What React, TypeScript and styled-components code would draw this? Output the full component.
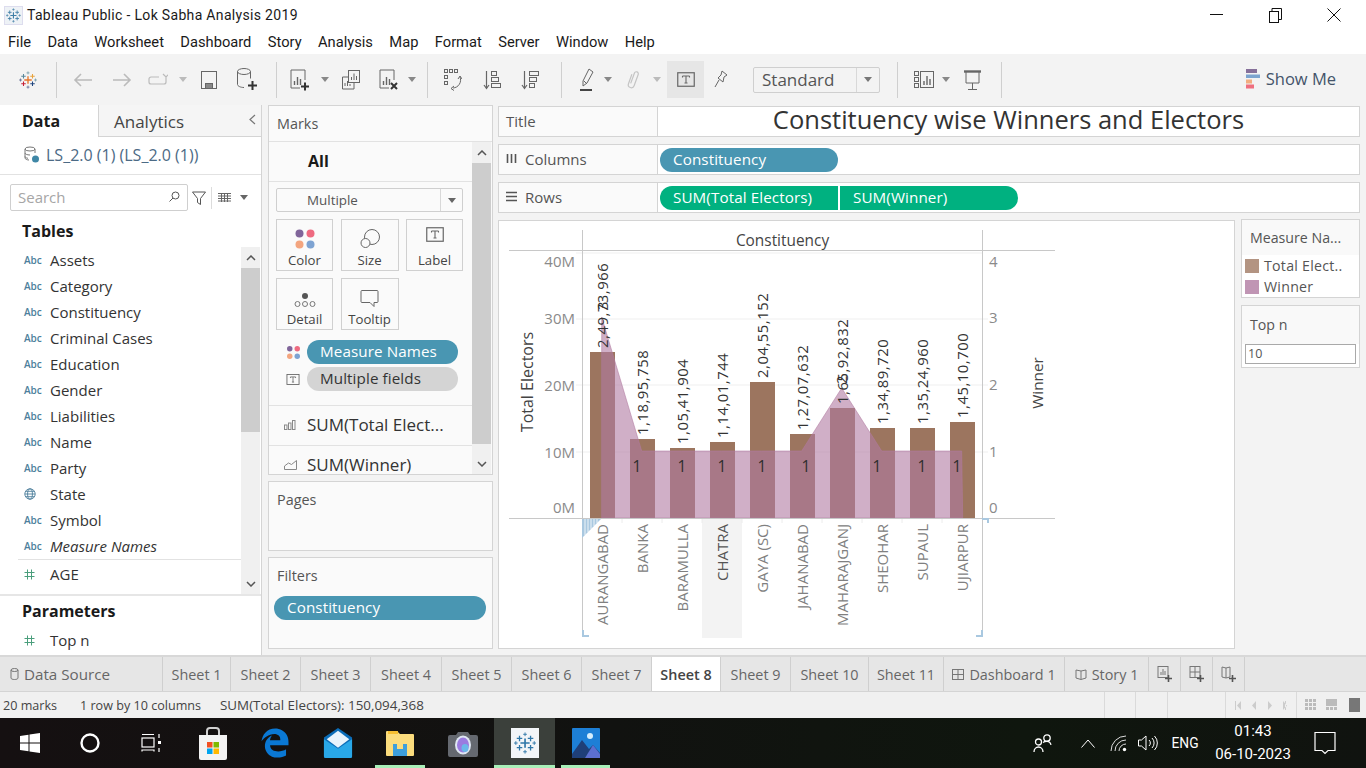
import React from 'react';
import styled, { createGlobalStyle } from 'styled-components';
import { FaEdgeLegacy } from 'react-icons/fa6';

const GlobalStyle = createGlobalStyle`
  html, body {
    margin: 0;
    padding: 0;
    background: #f3f3f3;
    overflow: hidden;
  }
  * { box-sizing: border-box; }
`;

const UI = `"Open Sans", "Noto Sans", sans-serif`;
const LINE = '#d4d4d4';

const Screen = styled.div`
  width: 1366px;
  height: 768px;
  display: flex;
  flex-direction: column;
  font-family: ${UI};
  color: #333;
  overflow: hidden;
`;

/* ---------- window chrome ---------- */
const TitleBar = styled.div`
  height: 30px;
  background: #fff;
  display: flex;
  align-items: center;
  padding-left: 4px;
`;
const TitleText = styled.span`
  font: 14px Roboto, sans-serif;
  color: #1a1a1a;
  margin-left: 4px;
  letter-spacing: 0.32px;
`;
const WindowButtons = styled.div`
  margin-left: auto;
  padding-right: 3px;
  display: flex;
`;
const WindowButton = styled.div`
  width: 58.5px;
  height: 30px;
  display: flex;
  align-items: center;
  justify-content: center;
`;
const MenuBar = styled.div`
  height: 24px;
  background: #fff;
  display: flex;
  align-items: center;
  padding-left: 8px;
  gap: 16.4px;
  font: 14.7px Roboto, sans-serif;
  color: #1a1a1a;
`;

/* ---------- toolbar ---------- */
const Toolbar = styled.div`
  height: 51px;
  background: #f3f3f3;
  display: flex;
  align-items: center;
  position: relative;
`;
const ToolSlot = styled.div<{ $w: number; $active?: boolean }>`
  width: ${p => p.$w}px;
  height: 37px;
  flex: none;
  display: flex;
  align-items: center;
  justify-content: center;
  background: ${p => (p.$active ? '#e6e6e6' : 'transparent')};
  & > svg { flex: none; }
`;
const ToolDivider = styled.div`
  width: 1px;
  height: 36px;
  flex: none;
  background: #cfcfcf;
`;
const StandardSelect = styled.div`
  width: 127px;
  height: 26px;
  flex: none;
  border: 1px solid #cfcfcf;
  border-radius: 2px;
  display: flex;
  align-items: center;
  font-size: 17px;
  color: #555;
`;
const StandardValue = styled.div`
  flex: 1;
  padding-left: 8px;
  border-right: 1px solid #d8d8d8;
  height: 100%;
  line-height: 24px;
`;
const StandardCaret = styled.div`
  width: 22px;
  display: flex;
  justify-content: center;
`;
const ShowMe = styled.div`
  margin-left: auto;
  margin-right: 30px;
  margin-top: -2px;
  display: flex;
  align-items: center;
  gap: 6px;
  font-size: 16.5px;
  color: #44546a;
`;

/* ---------- workspace ---------- */
const Workspace = styled.div`
  height: 550px;
  display: flex;
  background: #f3f3f3;
`;
const LeftPane = styled.div`
  width: 262px;
  background: #fff;
  border-right: 1px solid ${LINE};
  display: flex;
  flex-direction: column;
  flex: none;
`;
const PaneTabs = styled.div`
  height: 32px;
  display: flex;
`;
const DataTab = styled.div`
  width: 98px;
  padding-left: 22px;
  font-size: 16px;
  font-weight: 700;
  color: #1a1a1a;
  line-height: 33px;
`;
const AnalyticsTab = styled.div`
  flex: 1;
  background: #f5f5f5;
  border-left: 1px solid ${LINE};
  border-bottom: 1px solid ${LINE};
  padding-left: 15px;
  font-size: 17px;
  color: #444;
  line-height: 34px;
  display: flex;
  justify-content: space-between;
`;
const CollapseMark = styled.span`
  margin-right: 5px;
  display: flex;
  align-items: center;
  margin-top: -3px;
`;
const SourceRow = styled.div`
  height: 38px;
  flex: none;
  border-bottom: 1px solid #e2e2e2;
  display: flex;
  align-items: center;
  padding-left: 24px;
  padding-bottom: 1px;
  gap: 6px;
  font-size: 16px;
  color: #4c6a85;
`;
const SearchRow = styled.div`
  height: 45px;
  display: flex;
  align-items: center;
  padding: 0 0 0 10px;
  flex: none;
`;
const SearchBox = styled.div`
  width: 178px;
  height: 27px;
  border: 1px solid #cfcfcf;
  border-radius: 2px;
  display: flex;
  align-items: center;
  justify-content: space-between;
  padding: 0 7px 2px;
  font-size: 15px;
  color: #a6a6a6;
`;
const FilterGlyph = styled.svg`
  margin-left: 4px;
  flex: none;
`;
const ListCaret = styled.svg`
  margin-left: 9px;
  flex: none;
`;
const SearchDivider = styled.div`
  width: 1px;
  height: 22px;
  background: #dcdcdc;
  margin: 0 6px 0 5px;
`;
const GroupTitle = styled.div<{ $h: number; $pb?: number }>`
  height: ${p => p.$h}px;
  flex: none;
  padding-left: 22px;
  padding-bottom: ${p => p.$pb || 0}px;
  font-size: 16px;
  font-weight: 700;
  color: #1a1a1a;
  display: flex;
  align-items: center;
`;
const FieldArea = styled.div`
  height: 349px;
  flex: none;
  display: flex;
  border-bottom: 2px solid #e6e6e6;
`;
const FieldList = styled.div`
  flex: 1;
  overflow: hidden;
`;
const FieldRow = styled.div<{ $ruled?: boolean }>`
  height: 26px;
  display: flex;
  align-items: center;
  margin-left: 18px;
  font-size: 15px;
  color: #333;
  ${p => p.$ruled && `border-top: 1px solid #e2e2e2; height: 30px; padding-bottom: 1px;`}
`;
const ParamRow = styled(FieldRow)`
  margin-top: 2px;
`;
const FieldGlyph = styled.div`
  width: 32px;
  padding-left: 6px;
  flex: none;
  font-size: 10px;
  font-weight: 600;
  color: #4d7f9c;
  display: flex;
  align-items: center;
`;
const FieldName = styled.span<{ $italic?: boolean }>`
  font-style: ${p => (p.$italic ? 'italic' : 'normal')};
`;
const ScrollTrack = styled.div<{ $w: number }>`
  width: ${p => p.$w}px;
  flex: none;
  background: #f0f0f0;
  display: flex;
  flex-direction: column;
  margin-right: 1px;
`;
const ScrollCap = styled.div`
  height: 21px;
  flex: none;
  display: flex;
  align-items: center;
  justify-content: center;
`;
const ScrollThumb = styled.div<{ $h: number }>`
  height: ${p => p.$h}px;
  flex: none;
  background: #cdcdcd;
`;
const ScrollRest = styled.div`
  flex: 1;
`;

/* ---------- marks column ---------- */
const MarksColumn = styled.div`
  width: 225px;
  margin-left: 6px;
  flex: none;
  display: flex;
  flex-direction: column;
  gap: 6px;
`;
const Card = styled.div<{ $h: number }>`
  height: ${p => p.$h}px;
  flex: none;
  background: #fafafa;
  border: 1px solid ${LINE};
  overflow: hidden;
`;
const CardTitle = styled.div`
  height: 35px;
  padding-left: 8px;
  font-size: 14.4px;
  color: #555;
  line-height: 36px;
`;
const MarksBody = styled.div`
  height: 333px;
  display: flex;
  border-top: 1px solid #e2e2e2;
`;
const MarksContent = styled.div`
  flex: 1;
  overflow: hidden;
`;
const AllRow = styled.div`
  height: 40px;
  border-bottom: 1px solid #e2e2e2;
  padding-left: 39px;
  font-size: 16px;
  font-weight: 700;
  color: #1a1a1a;
  line-height: 38px;
`;
const MarkTypeSelect = styled.div`
  width: 187px;
  height: 24px;
  margin: 6px 0 7px 7px;
  border: 1px solid #cfcfcf;
  border-radius: 2px;
  display: flex;
  align-items: center;
  font-size: 13.4px;
  color: #555;
`;
const MarkTypeValue = styled.div`
  flex: 1;
  padding-left: 30px;
  border-right: 1px solid #d8d8d8;
  line-height: 22px;
  height: 100%;
`;
const MarkTypeCaret = styled.div`
  width: 21px;
  display: flex;
  justify-content: center;
`;
const MarkCards = styled.div`
  display: grid;
  grid-template-columns: 57px 58px 57px;
  grid-auto-rows: 52px;
  column-gap: 7.5px;
  row-gap: 7px;
  margin-left: 7px;
`;
const MarkCard = styled.div`
  border: 1px solid #d0d0d0;
  display: flex;
  flex-direction: column;
  align-items: center;
  justify-content: flex-end;
  gap: 1px;
  padding-bottom: 1px;
  font-size: 13.2px;
  color: #444;
`;
const LabelGlyph = styled.div`
  padding-bottom: 4px;
`;
const PillRows = styled.div`
  margin: 10px 0 14px 16px;
  display: flex;
  flex-direction: column;
  gap: 3px;
`;
const PillRow = styled.div`
  display: flex;
  align-items: center;
  gap: 6px;
`;
const GlyphBox = styled.div`
  width: 16px;
  display: flex;
  justify-content: center;
`;
const Pill = styled.div<{ $bg: string; $dark?: boolean; $w: number; $side?: 'left' | 'right' }>`
  width: ${p => p.$w}px;
  height: 24px;
  flex: none;
  background: ${p => p.$bg};
  color: ${p => (p.$dark ? '#333' : '#fff')};
  border-radius: ${p =>
    p.$side === 'left' ? '12px 0 0 12px' : p.$side === 'right' ? '0 12px 12px 0' : '12px'};
  padding-left: 13px;
  font-size: 15.2px;
  letter-spacing: 0.1px;
  font-weight: 500;
  line-height: 23px;
  white-space: nowrap;
`;
const MeasureRow = styled.div`
  height: 40px;
  border-top: 1px solid #e2e2e2;
  display: flex;
  align-items: center;
  padding-bottom: 2px;
  font-size: 17px;
  color: #333;
`;
const MeasureGlyph = styled.div`
  width: 38px;
  flex: none;
  display: flex;
  justify-content: center;
  padding-left: 4px;
`;
const FilterPill = styled.div`
  margin: 3px 5px 0;
`;

/* ---------- view column ---------- */
const ViewColumn = styled.div`
  width: 862px;
  margin-left: 5px;
  padding-top: 1px;
  display: flex;
  flex-direction: column;
  gap: 7px;
  flex: none;
`;
const Shelf = styled.div`
  height: 31px;
  flex: none;
  background: #fff;
  border: 1px solid ${LINE};
  display: flex;
  align-items: center;
`;
const ShelfLabel = styled.div`
  width: 159px;
  height: 100%;
  flex: none;
  border-right: 1px solid ${LINE};
  display: flex;
  align-items: center;
  padding: 0 0 2px 7px;
  gap: 8px;
  font-size: 15px;
  color: #555;
  background: #fafafa;
`;
const ShelfPills = styled.div`
  display: flex;
  gap: 2px;
  padding-left: 2px;
`;
const ChartTitle = styled.div`
  flex: 1;
  text-align: center;
  font-size: 25.5px;
  color: #333;
  line-height: 26px;
  margin-top: -6px;
`;
const ViewBody = styled.div`
  height: 429px;
  display: flex;
  gap: 6px;
`;
const ChartPanel = styled.div`
  width: 737px;
  height: 429px;
  flex: none;
  background: #fff;
  border: 1px solid ${LINE};
`;
const ChartSvg = styled.svg`
  display: block;
  font-family: ${UI};
`;
const SideColumn = styled.div`
  width: 119px;
  margin-top: -1px;
  display: flex;
  flex-direction: column;
  gap: 7px;
`;
const SideCard = styled.div<{ $h: number }>`
  height: ${p => p.$h}px;
  border: 1px solid ${LINE};
  background: #fff;
`;
const SideTitle = styled.div<{ $h: number }>`
  height: ${p => p.$h}px;
  background: #f9f9f9;
  padding-left: 8px;
  font-size: 14.2px;
  color: #555;
  line-height: ${p => p.$h}px;
`;
const LegendRow = styled.div`
  height: 21px;
  display: flex;
  align-items: center;
  gap: 5px;
  padding-left: 3px;
  font-size: 14.2px;
  color: #555;
  letter-spacing: 0.25px;
`;
const LegendSwatch = styled.div<{ $c: string }>`
  width: 14px;
  height: 14px;
  background: ${p => p.$c};
`;
const TopNInput = styled.div`
  width: 111px;
  height: 20px;
  margin: 0 0 0 3px;
  border: 1px solid #a9a9a9;
  background: #fff;
  padding-left: 2px;
  font-size: 12.5px;
  color: #555;
  line-height: 18px;
`;

/* ---------- tabs + status ---------- */
const TabBar = styled.div`
  height: 37px;
  display: flex;
  background: #e6e6e6;
  border-top: 2px solid #d8d8d8;
  border-bottom: 1px solid #d4d4d4;
`;
const Tab = styled.div<{ $w: number; $active?: boolean; $start?: boolean }>`
  width: ${p => p.$w}px;
  flex: none;
  border-right: 1px solid #cfcfcf;
  background: ${p => (p.$active ? '#fff' : 'transparent')};
  font-weight: ${p => (p.$active ? 600 : 400)};
  color: ${p => (p.$active ? '#444' : '#666')};
  font-size: ${p => (p.$start ? 15.2 : 14.4)}px;
  display: flex;
  align-items: center;
  justify-content: ${p => (p.$start ? 'flex-start' : 'center')};
  padding-left: ${p => (p.$start ? '10px' : '0')};
  gap: 5px;
  white-space: nowrap;
`;
const StatusBar = styled.div`
  height: 26px;
  background: #f0f0f0;
  display: flex;
  align-items: center;
  font-size: 12.6px;
  color: #444;
`;
const StatusText = styled.span<{ $w: number; $fs?: number }>`
  width: ${p => p.$w}px;
  flex: none;
  padding-left: 3px;
  white-space: nowrap;
  font-size: ${p => p.$fs || 12.6}px;
`;
const StatusCell = styled.div<{ $w: number }>`
  width: ${p => p.$w}px;
  height: 100%;
  flex: none;
  border-right: 1px solid #dadada;
  display: flex;
  align-items: center;
  justify-content: center;
  gap: 8px;
`;
const ViewModes = styled.svg`
  margin-left: 8px;
  flex: none;
`;

/* ---------- taskbar ---------- */
const Taskbar = styled.div`
  height: 50px;
  background: linear-gradient(90deg, #151011 0%, #111210 45%, #0f160e 75%, #10130f 100%);
  display: flex;
  align-items: stretch;
  color: #fff;
`;
const TaskSlot = styled.div<{ $w: number; $line?: number; $active?: boolean }>`
  width: ${p => p.$w}px;
  flex: none;
  position: relative;
  display: flex;
  align-items: center;
  justify-content: center;
  background: ${p => (p.$active ? '#3b403b' : 'transparent')};
  ${p =>
    p.$line !== undefined &&
    `&::after {
      content: '';
      position: absolute;
      left: ${p.$line}px;
      right: ${p.$line}px;
      bottom: 0;
      height: 3px;
      background: #a8efb8;
    }`}
`;
const TaskRight = styled.div`
  margin-left: auto;
  padding-right: 19px;
  display: flex;
  align-items: center;
`;
const Clock = styled.div`
  width: 100px;
  text-align: center;
  font-size: 15px;
  line-height: 23px;
  font-family: Roboto, sans-serif;
`;
const Eng = styled.span`
  width: 36px;
  text-align: center;
  font: 13.8px Roboto, sans-serif;
`;
const TraySlot = styled.div<{ $w: number }>`
  width: ${p => p.$w}px;
  flex: none;
  display: flex;
  justify-content: center;
`;

/* ---------- small drawings ---------- */
const Caret = ({ c = '#888' }: { c?: string }) => (
  <svg width="8" height="5" viewBox="0 0 8 5"><path d="M0 0h8L4 5z" fill={c} /></svg>
);

const Cross = ({ x, y, r, c, w = 1.4 }: { x: number; y: number; r: number; c: string; w?: number }) => (
  <path d={`M${x - r} ${y}H${x + r}M${x} ${y - r}V${y + r}`} stroke={c} strokeWidth={w} fill="none" />
);

const TableauMark = ({ size = 20, mono }: { size?: number; mono?: string }) => {
  const col = (c: string) => mono || c;
  return (
    <svg width={size} height={size} viewBox="0 0 24 24">
      <Cross x={12} y={12} r={5} c={col('#e8762b')} w={1.8} />
      <Cross x={6} y={7} r={3} c={col('#59879b')} />
      <Cross x={18} y={7} r={3} c={col('#e8a33d')} />
      <Cross x={6} y={17} r={3} c={col('#c72037')} />
      <Cross x={18} y={17} r={3} c={col('#1f447e')} />
      <Cross x={12} y={2.5} r={2} c={col('#7099a6')} w={1} />
      <Cross x={12} y={21.5} r={2} c={col('#5b6591')} w={1} />
      <Cross x={2} y={12} r={2} c={col('#5b6591')} w={1} />
      <Cross x={22} y={12} r={2} c={col('#7099a6')} w={1} />
    </svg>
  );
};

const ColorDots = ({ s = 22 }: { s?: number }) => (
  <svg width={s} height={s} viewBox="0 0 22 22">
    <circle cx="5.5" cy="5.5" r="4" fill="#80659a" />
    <circle cx="16.5" cy="5.5" r="4" fill="#ee6a80" />
    <circle cx="5.5" cy="16.5" r="4" fill="#f3a57f" />
    <circle cx="16.5" cy="16.5" r="4" fill="#7ea3d2" />
  </svg>
);

const TBox = ({ w = 18, h = 15 }: { w?: number; h?: number }) => (
  <svg width={w} height={h} viewBox="0 0 18 15" fill="none">
    <rect x="0.75" y="0.75" width="16.5" height="13.5" stroke="#666" strokeWidth="1.2" />
    <path d="M5.5 4h7M9 4v7M7.5 11h3M5.5 4v1.5M12.5 4v1.5" stroke="#666" strokeWidth="1.1" />
  </svg>
);

const BarsBox = ({ extra }: { extra?: 'plus' | 'x' }) => (
  <svg width="20" height="22" viewBox="0 0 20 22" fill="none">
    <path d="M15 11V1H1v18h9" stroke="#666" strokeWidth="1" />
    <path d="M4.5 16v-4M7.5 16V8M10.5 16v-6" stroke="#666" strokeWidth="1.4" />
    {extra === 'plus' && <path d="M11 17.5h8M15 13.5v8" stroke="#333" strokeWidth="2" />}
    {extra === 'x' && <path d="M12 14l6 6M18 14l-6 6" stroke="#333" strokeWidth="2" />}
  </svg>
);

const SheetPlus = ({ kind }: { kind: 'sheet' | 'dash' | 'story' }) => (
  <svg width="16" height="18" viewBox="0 0 16 18" fill="none">
    {kind === 'story' ? (
      <path d="M1 2l4 1 4-1v10l-4 1-4-1zM5 3v10" stroke="#777" />
    ) : (
      <rect x="1" y="1.5" width="10" height="11" stroke="#777" />
    )}
    {kind === 'sheet' && <path d="M4 10V7M6 10V4M8 10V6" stroke="#777" />}
    {kind === 'dash' && <path d="M1 7h10M6 1.5v11" stroke="#777" />}
    <path d="M8 13.5h7M11.5 10v7" stroke="#555" strokeWidth="1.6" />
  </svg>
);

const Glyph = {
  globe: (
    <svg width="12" height="12" viewBox="0 0 12 12" fill="none" stroke="#4d7f9c" strokeWidth="0.9">
      <circle cx="6" cy="6" r="5.2" />
      <ellipse cx="6" cy="6" rx="2.4" ry="5.2" />
      <path d="M.8 6h10.4M1.6 3.3h8.8M1.6 8.7h8.8" />
    </svg>
  ),
  hash: (
    <svg width="11" height="11" viewBox="0 0 11 11" stroke="#4a9e7c" strokeWidth="1">
      <path d="M3.5 0.5v10M7.5 0.5v10M0.5 3.5h10M0.5 7.5h10" />
    </svg>
  ),
};

const Chevron = ({ up }: { up?: boolean }) => (
  <svg width="10" height="6" viewBox="0 0 10 6" fill="none">
    <path d={up ? 'M1 5l4-4 4 4' : 'M1 1l4 4 4-4'} stroke="#555" strokeWidth="1.5" />
  </svg>
);

/* ---------- chart ---------- */
const names = ['AURANGABAD', 'BANKA', 'BARAMULLA', 'CHATRA', 'GAYA (SC)', 'JAHANABAD', 'MAHARAJGANJ', 'SHEOHAR', 'SUPAUL', 'UJIARPUR'];
const values = ['2,49,73,966', '1,18,95,758', '1,05,41,904', '1,14,01,744', '2,04,55,152', '1,27,07,632', '1,65,92,832', '1,34,89,720', '1,35,24,960', '1,45,10,700'];
const tops = [352, 439, 448, 442, 382, 434, 408, 428, 428, 422];
const winners = [317, 451, 451, 451, 451, 451, 388, 451, 451, 451];
const oneX = [637, 682, 722, 762, 806, 877, 922, 957];

const Chart = () => {
  const area = winners.map((y, i) => `${601.7 + 40 * i},${y}`).join(' ');
  return (
    <ChartSvg width={735} height={427} viewBox="499 221 735 427">
      <rect x="702" y="519" width="40" height="119" fill="#f3f3f3" />
      {[319, 385, 452].map(y => (
        <line key={y} x1="576" x2="988" y1={y} y2={y} stroke="#efefef" />
      ))}
      <line x1="576" x2="982" y1="253" y2="253" stroke="#efefef" />
      {tops.map((t, i) => (
        <rect key={i} x={590 + 40 * i} y={t} width="25" height={518 - t} fill="#9c755f" />
      ))}
      <polygon points={`601.7,518 ${area} 962.7,518`} fill="#b07aa1" fillOpacity="0.6" stroke="#b07aa1" strokeOpacity="0.55" />
      {names.map((_, i) => i > 0 && (
        <line key={i} x1={582 + 40 * i} x2={582 + 40 * i} y1="519" y2="523" stroke="#ececec" />
      ))}
      <line x1="509" x2="1055" y1="250.5" y2="250.5" stroke="#c8c8c8" />
      <line x1="509" x2="1055" y1="518.5" y2="518.5" stroke="#c8c8c8" />
      <line x1="582.5" x2="582.5" y1="230" y2="636" stroke="#c8c8c8" />
      <line x1="982.5" x2="982.5" y1="230" y2="636" stroke="#c8c8c8" />

      <path d="M582 519h19l-19 19z" fill="#a9c8e0" />
      <path d="M585 519v16M588 519v13M591 519v10M594 519v7M597 519v4" stroke="#fff" strokeWidth="0.8" />
      <path d="M583 630v6h6M982 630v6h-6M982 519h6v4" fill="none" stroke="#a9c8e0" strokeWidth="2" />

      <text x="782.5" y="246" fontSize="15.4" fill="#444" textAnchor="middle">Constituency</text>
      {[['40M', 267], ['30M', 324], ['20M', 391], ['10M', 458], ['0M', 513]].map(([t, y]) => (
        <text key={t} x="575" y={y} fontSize="15" fill="#8a8a8a" textAnchor="end">{t}</text>
      ))}
      {[['4', 267], ['3', 323], ['2', 390], ['1', 457], ['0', 513]].map(([t, y]) => (
        <text key={t} x="989" y={y} fontSize="15" fill="#8a8a8a">{t}</text>
      ))}
      <text transform="rotate(-90 533 382)" x="533" y="382" fontSize="16" fill="#444" textAnchor="middle">Total Electors</text>
      <text transform="rotate(-90 1043 383)" x="1043" y="383" fontSize="15.3" fill="#444" textAnchor="middle">Winner</text>

      {values.map((v, i) => {
        const x = 608 + 40 * i;
        const y = tops[i] - 4;
        return (
          <text key={v} transform={`rotate(-90 ${x} ${y})`} x={x} y={y} fontSize="14.8" letterSpacing="0.55" fill="#333">{v}</text>
        );
      })}
      <text transform="rotate(-90 608 310)" x="608" y="310" fontSize="14.8" fill="#333">3</text>
      <text transform="rotate(-90 847 384)" x="847" y="384" fontSize="14.8" fill="#333">2</text>
      {oneX.map(x => (
        <text key={x} x={x} y="472" fontSize="15.5" fill="#2d2d2d" textAnchor="middle">1</text>
      ))}
      {names.map((n, i) => {
        const x = 608 + 40 * i;
        return (
          <text key={n} transform={`rotate(-90 ${x} 524)`} x={x} y="524" fontSize="15" fill={n === 'CHATRA' ? '#555' : '#808080'} textAnchor="end">{n}</text>
        );
      })}
    </ChartSvg>
  );
};

const fields = ['Assets', 'Category', 'Constituency', 'Criminal Cases', 'Education', 'Gender', 'Liabilities', 'Name', 'Party', 'State', 'Symbol'];
const tabs: [string, number][] = [
  ['Sheet 1', 68], ['Sheet 2', 70], ['Sheet 3', 70], ['Sheet 4', 71], ['Sheet 5', 70], ['Sheet 6', 70], ['Sheet 7', 70],
];
const tabsAfter: [string, number][] = [['Sheet 9', 70], ['Sheet 10', 78], ['Sheet 11', 75]];

export default function App() {
  return (
    <>
      <GlobalStyle />
      <Screen>
        <TitleBar>
          <svg width="19" height="19" viewBox="0 0 19 19">
            <rect x="0.5" y="0.5" width="18" height="18" fill="#eef2f6" stroke="#dde" />
            <g transform="translate(2 2) scale(0.62)"><TableauMark size={24} mono="#3f7ea6" /></g>
          </svg>
          <TitleText>Tableau Public - Lok Sabha Analysis 2019</TitleText>
          <WindowButtons>
            <WindowButton><svg width="13" height="2"><rect width="13" height="1" fill="#111" /></svg></WindowButton>
            <WindowButton>
              <svg width="13" height="15" viewBox="0 0 13 15" fill="none" stroke="#111">
                <rect x="0.5" y="3.5" width="9" height="11" />
                <path d="M3 3V.5h9.5v11H10" />
              </svg>
            </WindowButton>
            <WindowButton>
              <svg width="14" height="14" viewBox="0 0 14 14" stroke="#111"><path d="M.5.5l13 13M13.5.5l-13 13" /></svg>
            </WindowButton>
          </WindowButtons>
        </TitleBar>
        <MenuBar>
          {['File', 'Data', 'Worksheet', 'Dashboard', 'Story', 'Analysis', 'Map', 'Format', 'Server', 'Window', 'Help'].map(m => (
            <span key={m}>{m}</span>
          ))}
        </MenuBar>

        <Toolbar>
          <ToolSlot $w={56}><TableauMark size={18} /></ToolSlot>
          <ToolDivider />
          <ToolSlot $w={52}>
            <svg width="20" height="16" viewBox="0 0 20 16" fill="none" stroke="#bbb" strokeWidth="1.6"><path d="M19 8H2M8 2L2 8l6 6" /></svg>
          </ToolSlot>
          <ToolSlot $w={26}>
            <svg width="20" height="16" viewBox="0 0 20 16" fill="none" stroke="#bbb" strokeWidth="1.6"><path d="M1 8h17M12 2l6 6-6 6" /></svg>
          </ToolSlot>
          <ToolSlot $w={46}>
            <svg width="20" height="14" viewBox="0 0 20 14" fill="none" stroke="#bbb" strokeWidth="1.2"><path d="M11 4H3a2 2 0 00-2 2v3a2 2 0 002 2h13a2 2 0 002-2V4M15 1l3 3 3-3" /></svg>
          </ToolSlot>
          <ToolSlot $w={4}><Caret c="#bbb" /></ToolSlot>
          <ToolSlot $w={48}>
            <svg width="16" height="18" viewBox="0 0 16 18" fill="none" stroke="#666"><rect x=".5" y=".5" width="15" height="17" /><rect x="4.500" y="12.500" width="7" height="5" fill="#888" /></svg>
          </ToolSlot>
          <ToolSlot $w={28}>
            <svg width="22" height="23" viewBox="0 0 22 23" fill="none" stroke="#666">
              <ellipse cx="8" cy="3.5" rx="6.5" ry="3" />
              <path d="M1.5 3.5v13c0 1.5 3 3 6.5 3M14.5 3.5v7" />
              <path d="M12 17.5h9M16.5 13v9" stroke="#333" strokeWidth="2" />
            </svg>
          </ToolSlot>
          <ToolSlot $w={15} />
          <ToolDivider />
          <ToolSlot $w={46}><BarsBox extra="plus" /></ToolSlot>
          <ToolSlot $w={4}><Caret /></ToolSlot>
          <ToolSlot $w={48}>
            <svg width="18" height="20" viewBox="0 0 18 20" fill="none" stroke="#666">
              <rect x="6.5" y=".5" width="11" height="12" />
              <path d="M6 7H.5v12H12v-6" />
              <path d="M9.5 10V7M12 10V3.500M14.500 10V6M3 16v-3M5.500 16v-5M8 16v-2" />
            </svg>
          </ToolSlot>
          <ToolSlot $w={28}><BarsBox extra="x" /></ToolSlot>
          <ToolSlot $w={18}><Caret /></ToolSlot>
          <ToolSlot $w={6} />
          <ToolDivider />
          <ToolSlot $w={50}>
            <svg width="18" height="22" viewBox="0 0 18 22" fill="none" stroke="#666">
              <rect x=".5" y=".5" width="3" height="3" /><rect x="5.5" y=".5" width="3" height="3" /><rect x="10.500" y=".5" width="3" height="3" />
              <rect x=".5" y="6.500" width="3" height="3" /><rect x=".5" y="12.500" width="3" height="3" />
              <path d="M16 8a8 8 0 01-7 11M14 10l2-3 2 3M10 17l-3 2.500 3 2" />
            </svg>
          </ToolSlot>
          <ToolSlot $w={28}>
            <svg width="18" height="20" viewBox="0 0 18 20" fill="none" stroke="#666">
              <path d="M3.500 1v17M1 15l2.500 3.500L6 15" strokeWidth="1.2" />
              <rect x="8.500" y="1.500" width="5" height="4" /><rect x="8.500" y="7.500" width="7" height="4" /><rect x="8.500" y="13.500" width="9" height="4" />
            </svg>
          </ToolSlot>
          <ToolSlot $w={48}>
            <svg width="18" height="20" viewBox="0 0 18 20" fill="none" stroke="#666">
              <path d="M3.500 1v17M1 15l2.500 3.500L6 15" strokeWidth="1.2" />
              <rect x="8.500" y="1.500" width="9" height="4" /><rect x="8.500" y="7.500" width="7" height="4" /><rect x="8.500" y="13.500" width="5" height="4" />
            </svg>
          </ToolSlot>
          <ToolSlot $w={7} />
          <ToolDivider />
          <ToolSlot $w={13} />
          <ToolSlot $w={24}>
            <svg width="14" height="24" viewBox="0 0 14 24" fill="none">
              <path d="M9 1l4 3-6 11-4 3v-5zM4 13l3 3" stroke="#666" />
              <rect x="0" y="21" width="12" height="2" fill="#444" />
            </svg>
          </ToolSlot>
          <ToolSlot $w={5} />
          <ToolSlot $w={8}><Caret /></ToolSlot>
          <ToolSlot $w={42}>
            <svg width="14" height="22" viewBox="0 0 14 22" fill="none" stroke="#c4c4c4" strokeWidth="1.2">
              <g transform="rotate(20 7 11)">
                <path d="M4 6v10a3 3 0 006 0V4a2 2 0 00-4 0v11" />
              </g>
            </svg>
          </ToolSlot>
          <ToolSlot $w={6}><Caret c="#bbb" /></ToolSlot>
          <ToolSlot $w={7} />
          <ToolSlot $w={37} $active><TBox /></ToolSlot>
          <ToolSlot $w={34}>
            <svg width="14" height="20" viewBox="0 0 14 20" fill="none" stroke="#666">
              <path d="M8 1l5 4-3 2-1 5-5-4 3-3zM5 10l-4 7" />
            </svg>
          </ToolSlot>
          <ToolSlot $w={15} />
          <StandardSelect>
            <StandardValue>Standard</StandardValue>
            <StandardCaret><Caret c="#777" /></StandardCaret>
          </StandardSelect>
          <ToolSlot $w={17} />
          <ToolDivider />
          <ToolSlot $w={6} />
          <ToolSlot $w={40}>
            <svg width="20" height="18" viewBox="0 0 20 18" fill="none" stroke="#666">
              <rect x=".5" y=".5" width="4" height="4" /><rect x=".5" y="6.500" width="4" height="4" /><rect x=".5" y="12.500" width="4" height="4" />
              <rect x="6.500" y=".5" width="13" height="16" />
              <path d="M10 14v-4M13 14V5M16 14V8" strokeWidth="1.4" />
            </svg>
          </ToolSlot>
          <ToolSlot $w={3}><Caret /></ToolSlot>
          <ToolSlot $w={50}>
            <svg width="17" height="20" viewBox="0 0 17 20" fill="none" stroke="#666">
              <path d="M0 1.500h17" strokeWidth="2.4" />
              <path d="M2 2v11h13V2M8.500 13v6M4 19.500h9" />
            </svg>
          </ToolSlot>
          <ToolSlot $w={4} />
          <ToolDivider />
          <ShowMe>
            <svg width="14" height="20" viewBox="0 0 14 20">
              <rect y="0" width="11" height="4" fill="#86709a" />
              <rect y="5.500" width="14" height="3.500" fill="#7ca4cf" />
              <rect y="10.500" width="6" height="4" fill="#f2ad80" />
              <rect y="15.500" width="8" height="4" fill="#ef6f7f" />
            </svg>
            Show Me
          </ShowMe>
        </Toolbar>

        <Workspace>
          <LeftPane>
            <PaneTabs>
              <DataTab>Data</DataTab>
              <AnalyticsTab>
                Analytics
                <CollapseMark>
                  <svg width="7" height="11" viewBox="0 0 7 11" fill="none" stroke="#777" strokeWidth="1.2"><path d="M6 1L1 5.500 6 10" /></svg>
                </CollapseMark>
              </AnalyticsTab>
            </PaneTabs>
            <SourceRow>
              <svg width="16" height="18" viewBox="0 0 16 18" fill="none" stroke="#777">
                <ellipse cx="6" cy="3" rx="5" ry="2" />
                <path d="M1 3v9c0 1 2 2 4 2M11 3v4M1 7c0 1 2 2 5 2M1 10.500c0 .8 1 1.500 3 1.800" />
                <circle cx="11.500" cy="13" r="3.500" fill="#3f87a6" stroke="none" />
              </svg>
              LS_2.0 (1) (LS_2.0 (1))
            </SourceRow>
            <SearchRow>
              <SearchBox>
                Search
                <svg width="11" height="11" viewBox="0 0 11 11" fill="none" stroke="#555">
                  <circle cx="6.500" cy="4.500" r="3.500" /><path d="M4 7l-3.500 3.500" />
                </svg>
              </SearchBox>
              <FilterGlyph width="14" height="14" viewBox="0 0 14 14" fill="none" stroke="#555">
                <path d="M.5 1h13L8.500 7.500v6l-3-2v-4z" />
              </FilterGlyph>
              <SearchDivider />
              <svg width="13" height="9" viewBox="0 0 13 9" stroke="#666"><path d="M0 .5h13M0 3h13M0 5.500h13M0 8h13M3.500 0v9M6.500 0v9M9.500 0v9" /></svg>
              <ListCaret width="8" height="5" viewBox="0 0 8 5"><path d="M0 0h8L4 5z" fill="#666" /></ListCaret>
            </SearchRow>
            <GroupTitle $h={27} $pb={5}>Tables</GroupTitle>
            <FieldArea>
              <FieldList>
                {fields.map(f => (
                  <FieldRow key={f}>
                    <FieldGlyph>{f === 'State' ? Glyph.globe : 'Abc'}</FieldGlyph>
                    <FieldName>{f}</FieldName>
                  </FieldRow>
                ))}
                <FieldRow>
                  <FieldGlyph>Abc</FieldGlyph>
                  <FieldName $italic>Measure Names</FieldName>
                </FieldRow>
                <FieldRow $ruled>
                  <FieldGlyph>{Glyph.hash}</FieldGlyph>
                  <FieldName>AGE</FieldName>
                </FieldRow>
              </FieldList>
              <ScrollTrack $w={19}>
                <ScrollCap><Chevron up /></ScrollCap>
                <ScrollThumb $h={164} />
                <ScrollRest />
                <ScrollCap><Chevron /></ScrollCap>
              </ScrollTrack>
            </FieldArea>
            <GroupTitle $h={29}>Parameters</GroupTitle>
            <ParamRow>
              <FieldGlyph>{Glyph.hash}</FieldGlyph>
              <FieldName>Top n</FieldName>
            </ParamRow>
          </LeftPane>

          <MarksColumn>
            <Card $h={370}>
              <CardTitle>Marks</CardTitle>
              <MarksBody>
                <MarksContent>
                  <AllRow>All</AllRow>
                  <MarkTypeSelect>
                    <MarkTypeValue>Multiple</MarkTypeValue>
                    <MarkTypeCaret><Caret c="#666" /></MarkTypeCaret>
                  </MarkTypeSelect>
                  <MarkCards>
                    <MarkCard><ColorDots /><span>Color</span></MarkCard>
                    <MarkCard>
                      <svg width="20" height="22" viewBox="0 0 20 22" fill="none" stroke="#666">
                        <circle cx="12" cy="9" r="7.500" /><circle cx="5.500" cy="15" r="4.500" fill="#fafafa" />
                      </svg>
                      <span>Size</span>
                    </MarkCard>
                    <MarkCard>
                      <LabelGlyph><TBox /></LabelGlyph>
                      <span>Label</span>
                    </MarkCard>
                    <MarkCard>
                      <svg width="22" height="18" viewBox="0 0 22 18" fill="none" stroke="#777">
                        <circle cx="11" cy="5" r="3" fill="#555" stroke="none" />
                        <circle cx="3.500" cy="13" r="2.500" /><circle cx="11" cy="13" r="2.500" /><circle cx="18.500" cy="13" r="2.500" />
                      </svg>
                      <span>Detail</span>
                    </MarkCard>
                    <MarkCard>
                      <svg width="20" height="20" viewBox="0 0 20 20" fill="none" stroke="#666">
                        <path d="M2 1.500h15a1 1 0 011 1v10a1 1 0 01-1 1h-3v4l-4-4H2a1 1 0 01-1-1v-10a1 1 0 011-1z" />
                      </svg>
                      <span>Tooltip</span>
                    </MarkCard>
                  </MarkCards>
                  <PillRows>
                    <PillRow>
                      <GlyphBox><ColorDots s={15} /></GlyphBox>
                      <Pill $bg="#4996b2" $w={151}>Measure Names</Pill>
                    </PillRow>
                    <PillRow>
                      <GlyphBox><TBox w={14} h={11} /></GlyphBox>
                      <Pill $bg="#d4d4d4" $dark $w={151}>Multiple fields</Pill>
                    </PillRow>
                  </PillRows>
                  <MeasureRow>
                    <MeasureGlyph>
                      <svg width="12" height="10" viewBox="0 0 12 10" fill="none" stroke="#888"><rect x=".5" y="5" width="2.500" height="4.500" /><rect x="4.500" y="3" width="2.500" height="6.500" /><rect x="8.500" y=".5" width="2.500" height="9" /></svg>
                    </MeasureGlyph>
                    SUM(Total Elect...
                  </MeasureRow>
                  <MeasureRow>
                    <MeasureGlyph>
                      <svg width="13" height="10" viewBox="0 0 13 10" fill="none" stroke="#888"><path d="M.5 9.500V6l4-3 3 1.500L12.500.5v9z" /></svg>
                    </MeasureGlyph>
                    SUM(Winner)
                  </MeasureRow>
                </MarksContent>
                <ScrollTrack $w={19}>
                  <ScrollCap><Chevron up /></ScrollCap>
                  <ScrollThumb $h={281} />
                  <ScrollRest />
                  <ScrollCap><Chevron /></ScrollCap>
                </ScrollTrack>
              </MarksBody>
            </Card>
            <Card $h={70}><CardTitle>Pages</CardTitle></Card>
            <Card $h={92}>
              <CardTitle>Filters</CardTitle>
              <FilterPill><Pill $bg="#4996b2" $w={212}>Constituency</Pill></FilterPill>
            </Card>
          </MarksColumn>

          <ViewColumn>
            <Shelf>
              <ShelfLabel>Title</ShelfLabel>
              <ChartTitle>Constituency wise Winners and Electors</ChartTitle>
            </Shelf>
            <Shelf>
              <ShelfLabel>
                <svg width="11" height="11" viewBox="0 0 11 11" stroke="#555" strokeWidth="1.600"><path d="M1.500 1v9M5.500 1v9M9.500 1v9" /></svg>
                Columns
              </ShelfLabel>
              <ShelfPills><Pill $bg="#4996b2" $w={178}>Constituency</Pill></ShelfPills>
            </Shelf>
            <Shelf>
              <ShelfLabel>
                <svg width="11" height="11" viewBox="0 0 11 11" stroke="#555" strokeWidth="1.600"><path d="M0 1.500h11M0 5.500h11M0 9.500h11" /></svg>
                Rows
              </ShelfLabel>
              <ShelfPills>
                <Pill $bg="#00b180" $w={178} $side="left">SUM(Total Electors)</Pill>
                <Pill $bg="#00b180" $w={178} $side="right">SUM(Winner)</Pill>
              </ShelfPills>
            </Shelf>
            <ViewBody>
              <ChartPanel><Chart /></ChartPanel>
              <SideColumn>
                <SideCard $h={79}>
                  <SideTitle $h={35}>Measure Na...</SideTitle>
                  <LegendRow><LegendSwatch $c="#b39482" />Total Elect..</LegendRow>
                  <LegendRow><LegendSwatch $c="#c095b4" />Winner</LegendRow>
                </SideCard>
                <SideCard $h={63}>
                  <SideTitle $h={38}>Top n</SideTitle>
                  <TopNInput>10</TopNInput>
                </SideCard>
              </SideColumn>
            </ViewBody>
          </ViewColumn>
        </Workspace>

        <TabBar>
          <Tab $w={163} $start>
            <svg width="9" height="12" viewBox="0 0 9 12" fill="none" stroke="#777"><ellipse cx="4.500" cy="2" rx="3.500" ry="1.500" /><path d="M1 2v8c0 2 7 2 7 0V2" /></svg>
            Data Source
          </Tab>
          {tabs.map(([t, w]) => <Tab key={t} $w={w}>{t}</Tab>)}
          <Tab $w={69} $active>Sheet 8</Tab>
          {tabsAfter.map(([t, w]) => <Tab key={t} $w={w}>{t}</Tab>)}
          <Tab $w={121}>
            <svg width="12" height="11" viewBox="0 0 12 11" fill="none" stroke="#777"><rect x=".5" y=".5" width="11" height="10" /><path d="M.5 5.500h11M6 .5v10" /></svg>
            Dashboard 1
          </Tab>
          <Tab $w={84}>
            <svg width="12" height="11" viewBox="0 0 12 11" fill="none" stroke="#777"><path d="M1 1l5 1 5-1v8l-5 1.500L1 9zM6 2v8.500" /></svg>
            Story 1
          </Tab>
          <Tab $w={32}><SheetPlus kind="sheet" /></Tab>
          <Tab $w={32}><SheetPlus kind="dash" /></Tab>
          <Tab $w={32}><SheetPlus kind="story" /></Tab>
        </TabBar>
        <StatusBar>
          <StatusText $w={77}>20 marks</StatusText>
          <StatusText $w={140}>1 row by 10 columns</StatusText>
          <StatusText $w={730} $fs={13.4}>SUM(Total Electors): 150,094,368</StatusText>
          <StatusCell $w={158} />
          <StatusCell $w={31} />
          <StatusCell $w={32} />
          <StatusCell $w={58} />
          <StatusCell $w={71}>
            <svg width="52" height="9" viewBox="0 0 52 9" fill="#ccc">
              <path d="M0 0h1v9H0zM6 0v9L2 4.500zM21 0v9l-4-4.500zM33 0v9l4-4.500zM48 0v9l4-4.500zM50 0h1v9h-1z" />
            </svg>
          </StatusCell>
          <ViewModes width="60" height="14" viewBox="0 0 60 14" fill="#bbb">
            <path d="M0 1h3v3H0zM4 1h3v3H4zM8 1h3v3H8zM0 5h3v3H0zM4 5h3v3H4zM8 5h3v3H8zM0 9h3v3H0zM4 9h3v3H4zM8 9h3v3H8z" />
            <path d="M21 1h11v7H21zM21 9h3v3h-3zM25 9h3v3h-3zM29 9h3v3h-3z" />
            <rect x="44" y="0" width="11" height="14" fill="#777" />
          </ViewModes>
        </StatusBar>

        <Taskbar>
          <TaskSlot $w={60}>
            <svg width="20" height="20" viewBox="0 0 20 20" fill="#fff">
              <path d="M0 3l8.500-1.300V9.500H0zM9.500 1.500L20 0v9.500H9.500zM0 10.500h8.500v7.800L0 17zM9.500 10.500H20V20l-10.500-1.500z" />
            </svg>
          </TaskSlot>
          <TaskSlot $w={60}>
            <svg width="20" height="20" viewBox="0 0 20 20" fill="none" stroke="#fff" strokeWidth="2.400"><circle cx="10" cy="10" r="8.500" /></svg>
          </TaskSlot>
          <TaskSlot $w={61}>
            <svg width="20" height="20" viewBox="0 0 20 20" fill="none" stroke="#fff" strokeWidth="1.200">
              <rect x="1" y="5" width="12" height="9" />
              <path d="M1 1.500h12M1 18.500V17h12v1.500M18 1v4M18 15v4" />
              <rect x="17" y="8" width="3" height="3" fill="#fff" stroke="none" />
            </svg>
          </TaskSlot>
          <TaskSlot $w={63}>
            <svg width="30" height="34" viewBox="0 0 30 34">
              <path d="M9 10V5a3 3 0 013-3h6a3 3 0 013 3v5" fill="none" stroke="#d0d0d0" strokeWidth="2" />
              <path d="M1 9h28v23a2 2 0 01-2 2H3a2 2 0 01-2-2z" fill="#f3f3f3" />
              <rect x="9" y="16" width="5.500" height="5.500" fill="#f25022" />
              <rect x="15.500" y="16" width="5.500" height="5.500" fill="#7fba00" />
              <rect x="9" y="22.500" width="5.500" height="5.500" fill="#00a4ef" />
              <rect x="15.500" y="22.500" width="5.500" height="5.500" fill="#ffb900" />
            </svg>
          </TaskSlot>
          <TaskSlot $w={62}><FaEdgeLegacy size={30} color="#0a78d4" /></TaskSlot>
          <TaskSlot $w={63}>
            <svg width="30" height="30" viewBox="0 0 30 32">
              <path d="M0 10L15 0l15 10v20a2 2 0 01-2 2H2a2 2 0 01-2-2z" fill="#0b6db8" />
              <path d="M3 12L15 3l12 9-12 9z" fill="#e8f4fc" />
              <path d="M0 12l15 10 15-10v18a2 2 0 01-2 2H2a2 2 0 01-2-2z" fill="#29a8e8" />
            </svg>
          </TaskSlot>
          <TaskSlot $w={62} $line={6}>
            <svg width="28" height="26" viewBox="0 0 28 26">
              <path d="M0 2a1 1 0 011-1h10l3 3h13a1 1 0 011 1v20a1 1 0 01-1 1H1a1 1 0 01-1-1z" fill="#fbdc7d" />
              <rect x="2" y="1" width="10" height="3" fill="#f6bf33" />
              <path d="M7 14h14v12H7z" fill="#3d9fdc" />
              <path d="M11 14h6v5h-6z" fill="#fbdc7d" />
            </svg>
          </TaskSlot>
          <TaskSlot $w={63}>
            <svg width="30" height="28" viewBox="0 0 30 28">
              <path d="M10 3h10l2 3h6a2 2 0 012 2v18a2 2 0 01-2 2H2a2 2 0 01-2-2V8a2 2 0 012-2h6z" fill="#656970" />
              <ellipse cx="15" cy="16" rx="8" ry="9.500" fill="#dfe7f3" />
              <ellipse cx="15" cy="16" rx="6" ry="7.500" fill="#9a7be0" />
              <ellipse cx="17" cy="19" rx="3.500" ry="4" fill="#6bb8ea" />
            </svg>
          </TaskSlot>
          <TaskSlot $w={61} $line={0} $active>
            <svg width="28" height="30" viewBox="0 0 28 30">
              <rect width="28" height="30" fill="#f2f5f8" />
              <g transform="translate(3 4) scale(0.92)"><TableauMark size={24} mono="#2f77a8" /></g>
            </svg>
          </TaskSlot>
          <TaskSlot $w={61} $line={6}>
            <svg width="28" height="30" viewBox="0 0 28 30">
              <rect width="28" height="30" rx="1" fill="#1d7fd6" />
              <circle cx="18" cy="8" r="3" fill="#d6eefc" />
              <path d="M0 26l10-14 7 9 4-4 7 8v5H0z" fill="#1f3f78" />
              <path d="M13 30l8-13 7 9v4z" fill="#5c6fd0" />
            </svg>
          </TaskSlot>
          <TaskRight>
            <TraySlot $w={48}>
              <svg width="20" height="20" viewBox="0 0 20 20" fill="none" stroke="#fff" strokeWidth="1.300">
                <circle cx="14" cy="5" r="3.200" /><circle cx="5.500" cy="9" r="3" />
                <path d="M1 19c0-3 2-5 4.500-5S10 16 10 19M10 9.500c1-1 2.500-1.200 4-1.200 2 0 3.500 1.500 4 3.500" />
              </svg>
            </TraySlot>
            <TraySlot $w={42}>
              <svg width="14" height="9" viewBox="0 0 14 9" fill="none" stroke="#fff"><path d="M.5 8.500L7 1l6.500 7.500" /></svg>
            </TraySlot>
            <TraySlot $w={20}>
              <svg width="18" height="17" viewBox="0 0 18 17" fill="none" stroke="#ddd">
                <path d="M1 16A15 15 0 0116 1M5 16A11 11 0 0116 5M9 16a7 7 0 017-7" />
                <circle cx="14.500" cy="14.500" r="1.700" fill="#fff" stroke="none" />
              </svg>
            </TraySlot>
            <TraySlot $w={38}>
              <svg width="20" height="18" viewBox="0 0 20 18" fill="none" stroke="#fff">
                <path d="M.5 6h3L8 2v14L3.500 12h-3zM11 6a4 4 0 010 6M14 4a7 7 0 010 10M16.500 2a10 10 0 010 14" />
              </svg>
            </TraySlot>
            <Eng>ENG</Eng>
            <Clock>01:43<br />06-10-2023</Clock>
            <TraySlot $w={44}>
              <svg width="22" height="24" viewBox="0 0 22 24" fill="none" stroke="#fff" strokeWidth="1.200">
                <path d="M1 1.500h20v18h-7l-3 3-3-3H1z" />
              </svg>
            </TraySlot>
          </TaskRight>
        </Taskbar>
      </Screen>
    </>
  );
}
